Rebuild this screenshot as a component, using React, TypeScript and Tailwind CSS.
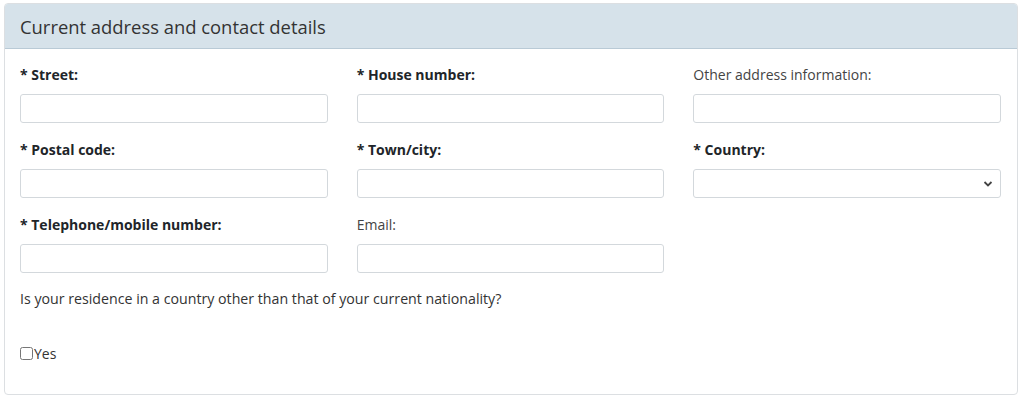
import React from "react";

const font = { fontFamily: '"Open Sans", "Noto Sans", sans-serif' };

function Field({ label, required, select }: { label: string; required?: boolean; select?: boolean }) {
  return (
    <div className="flex flex-col">
      <label className={`h-[20px] text-[14px] leading-[20px] mb-[9px] ${required ? "font-bold text-[#212529]" : "font-normal text-[#444]"}`}>
        {required ? "* " : ""}
        {label}
      </label>
      {select ? (
        <div className="relative h-[29px] rounded-[3px] border border-[#d3d8dc] bg-white">
          <svg className="absolute right-[7px] top-[10px]" width="10" height="8" viewBox="0 0 10 8">
            <path d="M1.5 2 L5 5.5 L8.5 2" fill="none" stroke="#444" strokeWidth="1.8" />
          </svg>
        </div>
      ) : (
        <input className="h-[29px] rounded-[3px] border border-[#d3d8dc] bg-white outline-none" />
      )}
    </div>
  );
}

export default function App() {
  return (
    <div className="bg-white w-[1024px] h-[401px] pt-[3px] pl-[4px] pr-[6px]" style={font}>
      <div className="rounded-[4px] border border-[#dcdfe2] bg-white overflow-hidden">
        <div className="h-[45px] bg-[#d6e2ea] border-b border-[#b9cad6] px-[15px] flex items-center">
          <h2 className="text-[18.4px] text-[#333] font-normal leading-none pt-[2px]">Current address and contact details</h2>
        </div>
        <div className="px-[15px] pt-[16px] pb-[30px]">
          <div className="grid grid-cols-3 gap-x-[29px] gap-y-[17px] pr-[1px]">
            <Field label="Street:" required />
            <Field label="House number:" required />
            <Field label="Other address information:" />
            <Field label="Postal code:" required />
            <Field label="Town/city:" required />
            <Field label="Country:" required select />
            <Field label="Telephone/mobile number:" required />
            <Field label="Email:" />
          </div>
          <p className="mt-[16px] text-[14.2px] leading-[20px] text-[#333]">
            Is your residence in a country other than that of your current nationality?
          </p>
          <label className="mt-[35px] flex items-center text-[14px] leading-[20px] text-[#333]">
            <input type="checkbox" className="w-[13px] h-[13px] m-0 mr-[1px] -mt-[2px]" />
            Yes
          </label>
        </div>
      </div>
    </div>
  );
}
